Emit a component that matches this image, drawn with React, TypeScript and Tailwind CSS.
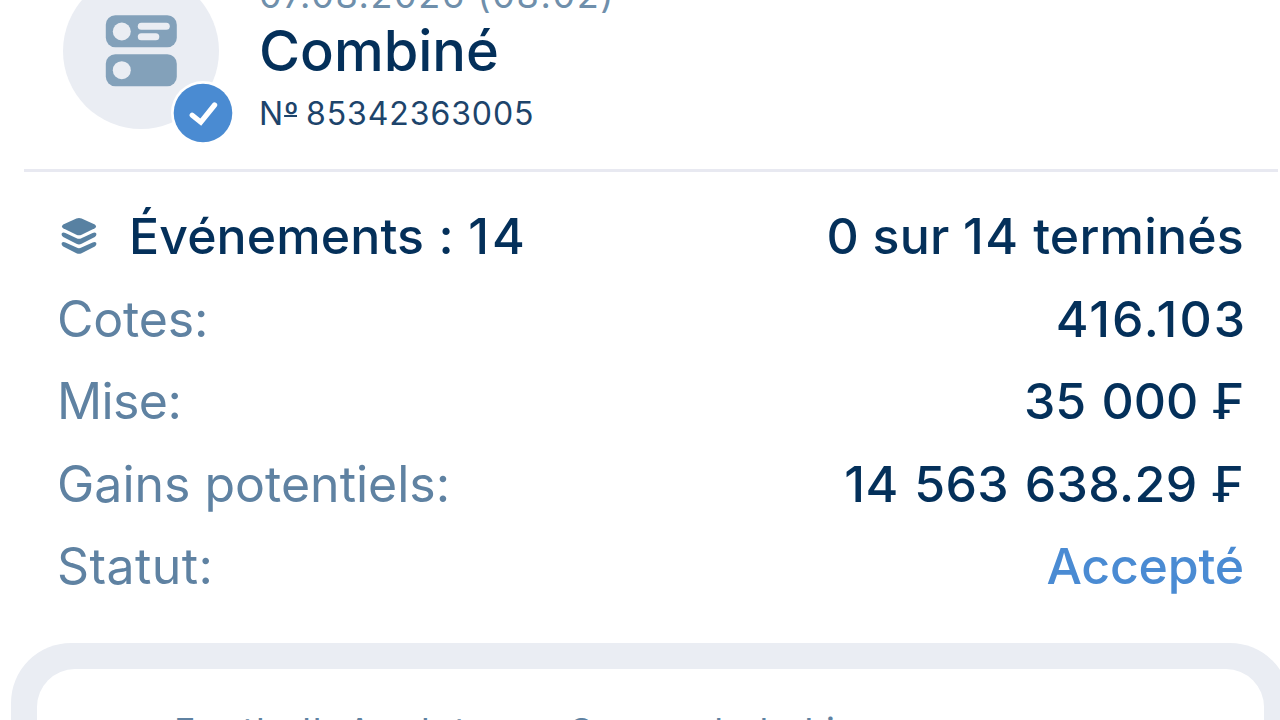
const rows = [
  {
    label: "Cotes:",
    value: "416.103",
    labelClass: "tracking-[-0.2px]",
    valueClass: "-mr-[3px] text-[#04305a] tracking-[2px]",
  },
  {
    label: "Mise:",
    value: "35 000 ₣",
    labelClass: "tracking-[-0.6px]",
    valueClass: "text-[#04305a] [word-spacing:2px]",
  },
  {
    label: "Gains potentiels:",
    value: "14 563 638.29 ₣",
    labelClass: "tracking-normal",
    valueClass: "text-[#04305a] tracking-[0.4px] [word-spacing:1.8px]",
  },
  {
    label: "Statut:",
    value: "Accepté",
    labelClass: "tracking-[0.4px]",
    valueClass: "text-[#4a8bd3] tracking-[-0.2px]",
  },
];

function CouponIcon() {
  return (
    <svg width="72" height="72" viewBox="0 0 72 72" fill="none">
      <rect x="0.8" y="0.3" width="71" height="32" rx="9.5" fill="#83a1ba" />
      <rect x="0.8" y="39.2" width="71" height="32" rx="9.5" fill="#83a1ba" />
      <circle cx="16.8" cy="16.5" r="9" fill="#eaedf3" />
      <circle cx="16.8" cy="55.2" r="9" fill="#eaedf3" />
      <rect x="32.8" y="7.8" width="32" height="7" rx="3.5" fill="#eaedf3" />
      <rect x="32.8" y="18.2" width="21.5" height="7" rx="3.5" fill="#eaedf3" />
    </svg>
  );
}

function CheckBadge() {
  return (
    <svg width="66" height="66" viewBox="0 0 66 66" fill="none">
      <circle cx="33" cy="33" r="32" fill="#ffffff" />
      <circle cx="33" cy="33" r="29.3" fill="#4a8bd2" />
      <path
        d="M22.2 35.2 L30.8 42.2 L44.6 25"
        stroke="#ffffff"
        strokeWidth="5.2"
        strokeLinecap="round"
        strokeLinejoin="miter"
      />
    </svg>
  );
}

function LayersIcon() {
  return (
    <svg width="36" height="38" viewBox="0 0 36 38" fill="#5881a2">
      <path d="M15.4 1.5 Q18 0.4 20.6 1.5 L33.8 7.6 Q36.2 9.4 33.8 11.2 L20.6 17.7 Q18 18.9 15.4 17.7 L2.2 11.2 Q-0.2 9.4 2.2 7.6 Z" />
      <path d="M1 16 Q2.4 15 4.4 16 L15.6 21.2 Q18 22.3 20.4 21.2 L31.6 16 Q33.6 15 35 16 Q36.2 18.6 33.8 20 L20.6 26.8 Q18 28 15.4 26.8 L2.2 20 Q-0.2 18.6 1 16 Z" />
      <path d="M1 25.4 Q2.4 24.4 4.4 25.4 L15.6 30.6 Q18 31.7 20.4 30.6 L31.6 25.4 Q33.6 24.4 35 25.4 Q36.2 28 33.8 29.4 L20.6 36.2 Q18 37.4 15.4 36.2 L2.2 29.4 Q-0.2 28 1 25.4 Z" />
    </svg>
  );
}

export default function App() {
  return (
    <div className="flex h-[720px] w-[1280px] flex-col overflow-hidden bg-white font-['Inter',sans-serif] whitespace-nowrap">
      <header className="flex h-[168.5px] shrink-0 items-start gap-[40px] pl-[63px]">
        <div className="relative -mt-[27px] flex size-[156px] shrink-0 items-center justify-center rounded-full bg-[#eaedf3]">
          <CouponIcon />
          <div className="absolute top-[107px] left-[107px]">
            <CheckBadge />
          </div>
        </div>
        <div className="-mt-[25px] flex flex-col">
          <span className="text-[36px] leading-[40px] tracking-[1.6px] text-[#6f8fab]">
            07.08.2026 (08:02)
          </span>
          <span className="mt-[4px] text-[56px] leading-[64px] font-medium text-[#04305a]">
            Combiné
          </span>
          <span className="mt-[11px] text-[32px] leading-[40px] tracking-[1px] text-[#1d446b] [word-spacing:-2px]">
            N
            <span className="tracking-[-1.5px] underline decoration-[2px] underline-offset-[-10px] [text-decoration-skip-ink:none]">
              º
            </span>{" "}
            <span className="ml-[1px] tracking-[0.9px]">85342363005</span>
          </span>
        </div>
      </header>

      <div className="mr-[2px] ml-[24px] h-[3px] shrink-0 bg-[#e8e9f1]" />

      <section className="mt-[23.5px] flex shrink-0 flex-col pr-[36px] pl-[57px] text-[50px] leading-[60px]">
        <div className="flex h-[82.5px] items-center justify-between font-medium text-[#04305a]">
          <div className="flex items-center gap-[32px] pl-[4px]">
            <LayersIcon />
            <span className="tracking-[0.1px] [word-spacing:1px]">
              Événements : <span className="tracking-[3px]">14</span>
            </span>
          </div>
          <span className="tracking-[0.2px]">
            0 sur <span className="tracking-[1.5px]">14</span> terminés
          </span>
        </div>
        {rows.map((row) => (
          <div
            key={row.label}
            className="flex h-[82.5px] items-center justify-between"
          >
            <span className={`text-[#5f82a2] ${row.labelClass}`}>
              {row.label}
            </span>
            <span className={`font-medium ${row.valueClass}`}>{row.value}</span>
          </div>
        ))}
      </section>

      <div className="mt-[35.5px] -mr-[10px] ml-[11px] h-[200px] shrink-0 rounded-t-[60px] bg-[#eaedf3] px-[26px] pt-[26px]">
        <div className="h-full rounded-t-[38px] bg-white pt-[42px] pl-[137px]">
          <span className="text-[36px] leading-[40px] tracking-[1.8px] text-[#5f82a2]">
            Football. Angleterre. Coupe de la Ligue
          </span>
        </div>
      </div>
    </div>
  );
}
